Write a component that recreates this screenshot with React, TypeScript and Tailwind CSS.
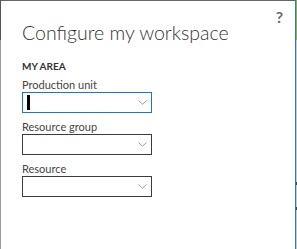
import React from "react";

function Chevron() {
  return (
    <svg width="9" height="5" viewBox="0 0 9 5" className="shrink-0">
      <path d="M0.5 0.5 L4.5 4.2 L8.5 0.5" fill="none" stroke="#9a9a9a" strokeWidth="1" />
    </svg>
  );
}

function Field({ label, focused }: { label: string; focused?: boolean }) {
  return (
    <div className="flex flex-col">
      <div className="mt-[8px] text-[11px] leading-none text-[#444]">{label}</div>
      <div
        className={
          "mt-[2px] w-[130px] h-[21px] border flex items-center justify-between pl-[4px] pr-[4px] " +
          (focused ? "border-[#1a74d2]" : "border-[#3c3c3c]")
        }
      >
        {focused ? <div className="w-[3px] h-[15px] bg-black" /> : <div />}
        <Chevron />
      </div>
    </div>
  );
}

export default function App() {
  return (
    <div
      className="w-[297px] h-[249px] flex bg-white overflow-hidden"
      style={{ fontFamily: 'Lato, "Open Sans", sans-serif' }}
    >
      <div className="w-[1px] h-full flex flex-col">
        <div className="h-[40px] bg-[#555]" />
        <div className="flex-1 bg-[#9a9a9a]" />
      </div>
      <div className="relative flex-1 border-t border-[#666] flex flex-col pl-[21px]">
        <button className="absolute right-[12px] top-[8px] text-[16px] font-bold leading-none text-[#6b6b6b]">?</button>
        <div className="mt-[22px] text-[19.5px] font-light leading-none text-[#333]">Configure my workspace</div>
        <div className="mt-[18px] text-[10px] font-bold leading-none text-[#333]">MY AREA</div>
        <Field label="Production unit" focused />
        <Field label="Resource group" />
        <Field label="Resource" />
      </div>
      <div className="w-[1px] h-full bg-[#2a7bd0]" />
      <div className="w-[1px] h-full flex flex-col">
        <div className="h-[40px] bg-[#8fae5a]" />
        <div className="h-[142px] bg-[#c6ccc6]" />
        <div className="h-[3px] bg-[#444]" />
        <div className="h-[22px] bg-[#c6ccc6]" />
        <div className="h-[3px] bg-[#444]" />
        <div className="flex-1 bg-[#c6ccc6]" />
      </div>
    </div>
  );
}
